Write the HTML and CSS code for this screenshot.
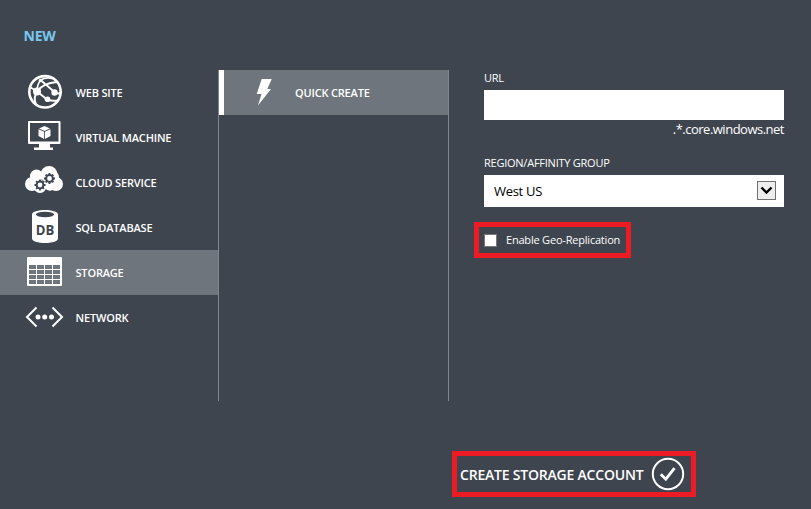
FILE: index.html
```
<!DOCTYPE html>
<html lang="en">
<head>
<meta charset="utf-8">
<title>New storage account</title>
<link rel="stylesheet" href="styles.css">
</head>
<body>
<h1 class="title"><span>NEW</span></h1>
<main class="columns">
  <nav class="services">
    <a class="item">
      <svg class="icon" viewBox="0 0 40 45"><g fill="none" stroke="#fff"><circle cx="20" cy="21.800" r="15.700" stroke-width="2.600"/><path d="M12 21.500Q18 13 32 12M12 21.500L22 29.500Q27 31.500 33 30.500M12 21.500Q8 28 11 34M15.500 10L30 22.500Q33.500 24 35.500 23" stroke-width="2"/><path d="M15.500 10Q12 15 12 21.500M15.500 10Q21 7 27 8.500M12 21.500L5 17" stroke-width="1.600"/></g><g fill="#fff"><circle cx="12" cy="21.500" r="4"/><circle cx="29.500" cy="22.500" r="3.200"/><circle cx="22.500" cy="29.300" r="2.800"/><circle cx="15.500" cy="10.500" r="1.800"/></g></svg>
      <span class="label">WEB SITE</span>
    </a>
    <a class="item">
      <svg class="icon" viewBox="0 0 40 45"><path fill="#fff" fill-rule="evenodd" d="M4 6h30.500q1 0 1 1v21q0 1-1 1H25v3.500h3V35H9v-2.500h5V29H4q-1 0-1-1V7q0-1 1-1zM5 8v18.500h28.500V8z"/><path fill="#fff" d="M19.500 11l5.500 2.500-5.500 2.500-5.500-2.500zM13.500 14.300l5.600 2.500v7.200l-5.600-3zM25.500 14.300l-5.600 2.500v7.200l5.600-3z"/></svg>
      <span class="label">VIRTUAL MACHINE</span>
    </a>
    <a class="item">
      <svg class="icon" viewBox="0 0 40 45"><g fill="#fff"><circle cx="7" cy="24" r="7"/><circle cx="11.500" cy="16" r="6.500"/><circle cx="24" cy="14.500" r="8.500"/><circle cx="28" cy="17" r="6"/><circle cx="31" cy="24" r="7"/><circle cx="15" cy="26.500" r="6.500"/><circle cx="25" cy="25" r="5.800"/></g><g fill="none" stroke="#3e454f"><circle cx="15" cy="25" r="3.400" stroke-width="2"/><path stroke-width="1.800" d="M15 19.500v2M15 28.500v2M9.500 25h2M18.500 25h2M11.100 21.100l1.400 1.400M17.500 27.500l1.400 1.400M11.100 28.900l1.400-1.400M17.500 22.500l1.400-1.400"/><circle cx="24.500" cy="18.500" r="3.400" stroke-width="2"/><path stroke-width="1.800" d="M24.500 13v2M24.500 22v2M19 18.500h2M28 18.500h2M20.600 14.600l1.400 1.400M27 21l1.400 1.400M20.600 22.400l1.400-1.400M27 16l1.400-1.400"/></g></svg>
      <span class="label">CLOUD SERVICE</span>
    </a>
    <a class="item">
      <svg class="icon" viewBox="0 0 40 45"><path fill="#fff" d="M7 9.500c0-6 26-6 26 0v24c0 6-26 6-26 0z"/><ellipse cx="20" cy="9.500" rx="9" ry="2.700" fill="#3e454f"/><text class="db" x="20" y="29.500" text-anchor="middle" textLength="18.500" lengthAdjust="spacingAndGlyphs">DB</text></svg>
      <span class="label">SQL DATABASE</span>
    </a>
    <a class="item selected">
      <svg class="icon" viewBox="0 0 40 45"><path fill="#fff" fill-rule="evenodd" d="M3 7h33q1 0 1 1v27q0 1-1 1H3q-1 0-1-1V8q0-1 1-1zM4 15v4h7v-4zm8 0v4h7v-4zm8 0v4h7v-4zm8 0v4h7v-4zM4 20v4h7v-4zm8 0v4h7v-4zm8 0v4h7v-4zm8 0v4h7v-4zM4 25v4h7v-4zm8 0v4h7v-4zm8 0v4h7v-4zm8 0v4h7v-4zM4 30v4h7v-4zm8 0v4h7v-4zm8 0v4h7v-4zm8 0v4h7v-4z"/></svg>
      <span class="label">STORAGE</span>
    </a>
    <a class="item">
      <svg class="icon" viewBox="0 0 40 45"><path d="M11.500 12.500L2 22l9.500 9.500M27.500 12.500L37 22l-9.500 9.500" fill="none" stroke="#fff" stroke-width="2"/><g fill="#fff"><circle cx="13" cy="22" r="2.500"/><circle cx="19.700" cy="22" r="2.500"/><circle cx="26.500" cy="22" r="2.500"/></g></svg>
      <span class="label">NETWORK</span>
    </a>
  </nav>
  <section class="methods">
    <a class="method">
      <svg class="bolt" viewBox="0 0 16 27"><path fill="#fff" d="M5.700 0H15.700L11.300 10H15L2 26.500 5.500 15H.7z"/></svg>
      <span class="label">QUICK CREATE</span>
    </a>
  </section>
  <form class="form">
    <label class="caption" for="url">URL</label>
    <input class="url" id="url" type="text">
    <div class="suffix"><span>.*.core.windows.net</span></div>
    <div class="caption">REGION/AFFINITY GROUP</div>
    <div class="select"><span class="value">West US</span><span class="arrow"><svg width="17" height="17" viewBox="0 0 17 17"><path d="M3.500 5.500l5 5 5-5" fill="none" stroke="#000" stroke-width="2.400"/></svg></span></div>
    <div class="geo"><span class="check"></span><span class="geo-text">Enable Geo-Replication</span></div>
  </form>
</main>
<footer class="footer">
  <div class="create"><span class="create-text">CREATE STORAGE ACCOUNT</span><svg class="tick" viewBox="0 0 34 34"><circle cx="17" cy="17" r="15.200" fill="none" stroke="#fff" stroke-width="2"/><path d="M9.800 17.200l5 5 8.700-11" fill="none" stroke="#fff" stroke-width="2.800"/></svg></div>
</footer>
</body>
</html>
```
FILE: styles.css
```
* { box-sizing: border-box; }
body {
  margin: 0;
  width: 811px;
  height: 509px;
  overflow: hidden;
  background: #3e454f;
  color: #fff;
  font-family: "Open Sans", "Noto Sans", sans-serif;
  font-size: 11px;
}
.title {
  margin: 0;
  height: 70px;
  padding: 26px 0 0 23.500px;
  font-size: 14px;
  line-height: 20px;
  font-weight: 700;
  letter-spacing: -0.2px;
  color: #79c8ee;
}
.columns { display: flex; height: 331px; }
.services { width: 219px; border-right: 1px solid #80868d; }
.item { display: flex; align-items: center; height: 45px; padding-left: 25px; }
.selected { background: #6e757c; }
.icon { width: 40px; height: 45px; margin-right: 10.500px; flex: none; }
.db { font: 700 15px "Open Sans", sans-serif; fill: #3e454f; }
.label { font-weight: 600; white-space: nowrap; line-height: 15px; letter-spacing: -0.18px; }
.methods { width: 230px; border-right: 1px solid #80868d; }
.method {
  display: flex;
  align-items: center;
  height: 45px;
  background: #6e757c;
  border-left: 5px solid #fff;
  padding-left: 32px;
}
.bolt { width: 16px; height: 27px; margin-right: 23px; }
.form { width: 300px; margin-left: 35px; }
.caption { display: block; height: 20px; line-height: 16px; white-space: nowrap; letter-spacing: -0.24px; }
.url { display: block; width: 300px; height: 30px; border: 0; border-radius: 0; padding: 0 9px; background: #fff; }
.suffix { height: 35px; line-height: 18px; font-size: 13px; letter-spacing: -0.5px; text-align: right; white-space: nowrap; }
.select {
  display: flex;
  justify-content: space-between;
  align-items: center;
  height: 32px;
  padding: 0 8px 0 10px;
  background: #fff;
  color: #000;
  font-size: 13px;
  letter-spacing: -0.3px;
}
.arrow { display: flex; width: 19px; height: 19px; margin-bottom: 1px; background: #eee; border: 1px solid #707070; }
.geo {
  display: flex;
  align-items: center;
  width: 157px;
  height: 36px;
  margin: 15px 0 0 -10px;
  border: 5px solid #ed1c24;
  padding-left: 5px;
  white-space: nowrap;
}
.geo-text { letter-spacing: -0.2px; margin-bottom: 1px; }
.check { width: 13px; height: 13px; margin-right: 9px; background: #fff; border: 1px solid #777; flex: none; }
.footer { padding: 50px 0 0 452px; }
.create {
  display: flex;
  align-items: center;
  width: 244px;
  height: 46px;
  border: 5px solid #ed1c24;
  padding-left: 3px;
  font-size: 14px;
  font-weight: 600;
  white-space: nowrap;
}
.create-text { width: 191px; letter-spacing: -0.21px; }
.tick { width: 34px; height: 34px; flex: none; }
```
